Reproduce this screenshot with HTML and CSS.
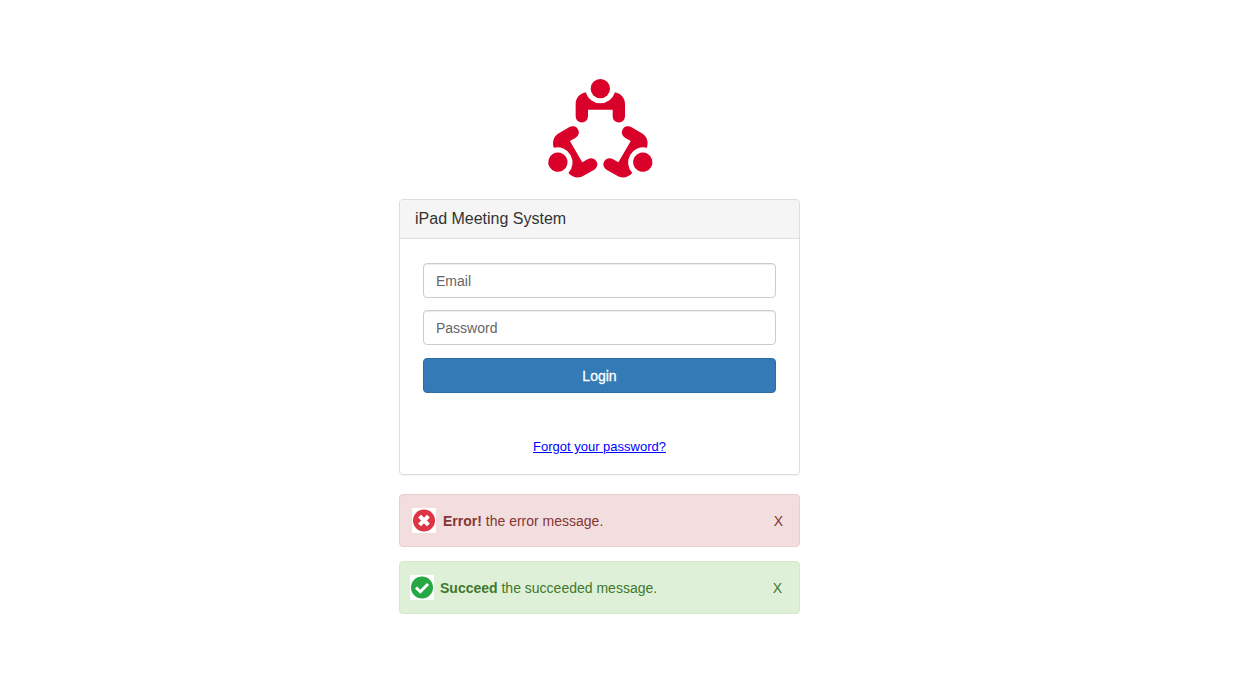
FILE: index.html
```html
<!DOCTYPE html>
<html lang="en">
<head>
<meta charset="utf-8">
<meta name="viewport" content="width=device-width, initial-scale=1">
<title>iPad Meeting System</title>
<link rel="stylesheet" href="styles.css">
</head>
<body>
<main class="page">
  <svg class="logo" viewBox="0 0 360 336" role="img" aria-label="Meeting logo">
    <defs>
      <g id="person">
        <circle cx="181" cy="50" r="29"/>
        <path d="M137 61A46 46 0 0 0 225 61C243 65 255 78 255 96V133A18.500 18.500 0 0 1 218 133V113H144V133A18.500 18.500 0 0 1 107 133V96C107 78 119 65 137 61Z"/>
      </g>
    </defs>
    <use href="#person"/>
    <use href="#person" transform="rotate(120 181 197)"/>
    <use href="#person" transform="rotate(240 181 197)"/>
  </svg>

  <section class="panel">
    <h1 class="panel-heading">iPad Meeting System</h1>
    <form class="panel-body">
      <input class="field" type="email" placeholder="Email" aria-label="Email">
      <input class="field" type="password" placeholder="Password" aria-label="Password">
      <button class="login" type="submit">Login</button>
      <a class="forgot" href="#forgot">Forgot your password?</a>
    </form>
  </section>

  <div class="alert alert-error" role="alert">
    <svg class="alert-icon" viewBox="0 0 24 24" aria-hidden="true">
      <circle cx="12" cy="12" r="11" fill="#dc3545"/>
      <path d="M9 9L15 15M15 9L9 15" stroke="#fff" stroke-width="4" stroke-linecap="square"/>
    </svg>
    <p class="alert-text"><strong>Error!</strong> the error message.</p>
    <button class="close" type="button" aria-label="Close error">X</button>
  </div>

  <div class="alert alert-success" role="status">
    <svg class="alert-icon" viewBox="0 0 24 24" aria-hidden="true">
      <circle cx="12" cy="12" r="11" fill="#28a745"/>
      <path d="M6 12L10.300 16.200L18 8.500" fill="none" stroke="#fff" stroke-width="3"/>
    </svg>
    <p class="alert-text"><strong>Succeed</strong> the succeeded message.</p>
    <button class="close" type="button" aria-label="Close success">X</button>
  </div>
</main>
</body>
</html>
```
FILE: styles.css
```css
* {
  box-sizing: border-box;
}

body {
  margin: 0;
  padding: 72px 36px 24px 0;
  background: #fff;
  font-family: "Liberation Sans", Arial, sans-serif;
  font-size: 14px;
  line-height: 20px;
  color: #333;
}

.page {
  display: flex;
  flex-direction: column;
  max-width: 401px;
  margin: 0 auto;
}

.logo {
  align-self: center;
  width: 120px;
  margin-bottom: 15px;
  fill: #d90029;
}

.panel {
  margin-bottom: 19px;
  border: 1px solid #ddd;
  border-radius: 4px;
  box-shadow: 0 1px 1px rgba(0, 0, 0, 0.05);
}

.panel-heading {
  margin: 0;
  padding: 9px 15px;
  border-bottom: 1px solid #ddd;
  border-radius: 3px 3px 0 0;
  background: #f5f5f5;
  font-size: 16px;
  font-weight: 400;
}

.panel-body {
  display: flex;
  flex-direction: column;
  padding: 24px 23px 17px;
}

.field {
  width: 100%;
  height: 35px;
  margin: 0 0 12px;
  padding: 6px 12px;
  border: 1px solid #ccc;
  border-radius: 4px;
  background: #fff;
  box-shadow: inset 0 1px 1px rgba(0, 0, 0, 0.08);
  font: inherit;
  color: #555;
}

.field::placeholder {
  color: #666;
  opacity: 1;
}

.login {
  height: 35px;
  margin-top: 1px;
  padding: 0 12px;
  border: 1px solid #2e6da4;
  border-radius: 4px;
  background: #337ab7;
  font: inherit;
  color: #fff;
  -webkit-text-stroke: 0.3px #fff;
}

.forgot {
  align-self: center;
  margin-top: 44px;
  font-size: 13px;
  color: #00f;
}

.alert {
  display: flex;
  align-items: center;
  min-height: 53px;
  margin-bottom: 14px;
  padding: 0 12px;
  border: 1px solid;
  border-radius: 4px;
}

.alert-error {
  border-color: #ebccd1;
  background: #f2dede;
  color: #843534;
}

.alert-success {
  padding: 0 13px 0 10px;
  border-color: #d6e9c6;
  background: #dff0d8;
  color: #40782c;
}

.alert-icon {
  flex: none;
  width: 24px;
  height: 25px;
  background: #fff;
}

.alert-text {
  flex: 1;
  margin: 0 0 0 7px;
}

.alert-success .alert-text {
  margin-left: 6px;
}

.close {
  padding: 4px;
  border: 0;
  background: none;
  font: inherit;
  color: inherit;
  cursor: pointer;
}
```
